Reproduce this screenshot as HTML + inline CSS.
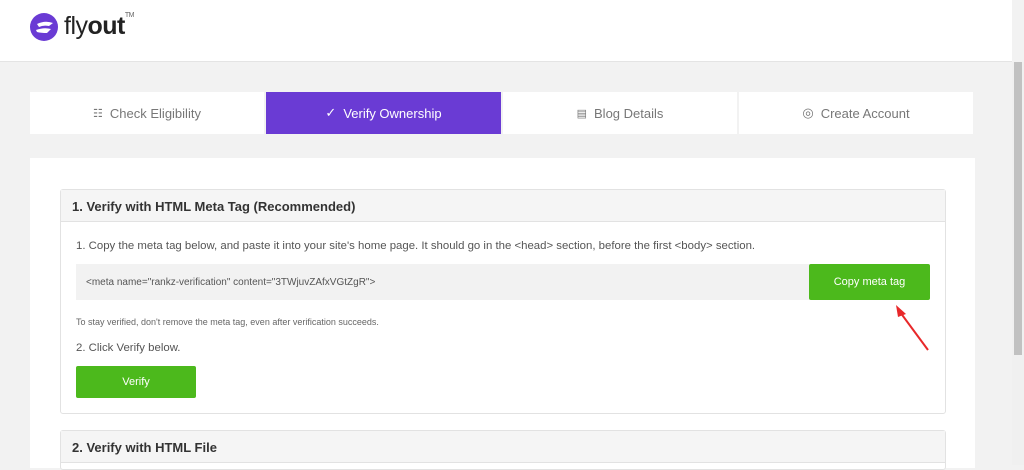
<!DOCTYPE html>
<html><head><style>
*{margin:0;padding:0;box-sizing:border-box}
body{width:1024px;height:465px;overflow:hidden;background:#f2f2f2;font-family:"Liberation Sans",sans-serif;position:relative;color:#444}
.hdr{position:absolute;left:0;top:0;width:1012px;height:62px;background:#fff;border-bottom:1px solid #e4e4e4}
.sb{position:absolute;right:0;top:62px;width:12px;height:403px;background:#f0f0f0}
.sb div{position:absolute;left:2px;top:0;width:8px;height:293px;background:#c1c1c1}
.tab{position:absolute;top:92px;height:42px;background:#fff;font-size:13px;color:#777;display:flex;align-items:center;justify-content:center;gap:7px}
.tab.on{background:#6a3bd4;color:#fff}
.panel{position:absolute;left:30px;top:158px;width:945px;height:310px;background:#fff}
.card{position:absolute;left:60px;width:886px;border:1px solid #e2e2e2;border-radius:3px;background:#fff}
.ch{height:32px;background:#f5f5f5;border-bottom:1px solid #e2e2e2;font-size:13px;font-weight:bold;color:#333;padding:9px 11px}
.t{position:absolute;font-size:11.4px;color:#555;white-space:nowrap}
.btn{position:absolute;background:#4cb91c;color:#fff;font-size:11px;display:flex;align-items:center;justify-content:center;border-radius:2px}
</style></head><body>
<div class="hdr">
<svg style="position:absolute;left:29px;top:12px" width="30" height="30" viewBox="0 0 30 30"><circle cx="15" cy="15" r="14" fill="#6a3bd4"/><path d="M8 12 Q16 8 24 11 L20 14 Q14 13 10 15Z M7 18 Q15 15 22 17 L18 21 Q12 21 8 20Z" fill="#fff"/></svg>
<div style="position:absolute;left:64px;top:12px;font-size:25px;color:#222;letter-spacing:-0.5px">fly<b>out</b><sup style="font-size:7px;vertical-align:top;color:#666">TM</sup></div>
</div>
<div class="sb"><div></div></div>
<div class="tab" style="left:30px;width:234px"><span style="font-size:11px">☷</span>Check Eligibility</div>
<div class="tab on" style="left:266px;width:235px"><span>✓</span>Verify Ownership</div>
<div class="tab" style="left:503px;width:234px"><span style="font-size:11px">▤</span>Blog Details</div>
<div class="tab" style="left:739px;width:234px"><span>◎</span>Create Account</div>
<div class="panel"></div>
<div class="card" style="top:189px;height:225px"><div class="ch">1. Verify with HTML Meta Tag (Recommended)</div></div>
<div class="t" style="left:76px;top:240px">1. Copy the meta tag below, and paste it into your site's home page. It should go in the &lt;head&gt; section, before the first &lt;body&gt; section.</div>
<div style="position:absolute;left:76px;top:264px;width:734px;height:36px;background:#f2f2f2"></div>
<div class="t" style="left:86px;top:277px;font-size:10px">&lt;meta name="rankz-verification" content="3TWjuvZAfxVGtZgR"&gt;</div>
<div class="btn" style="left:809px;top:264px;width:121px;height:36px">Copy meta tag</div>
<svg style="position:absolute;left:890px;top:300px" width="40" height="55"><path d="M38 50 L10 12" stroke="#e8282a" stroke-width="2"/><path d="M6 5 L16 14 L8 17Z" fill="#e8282a"/></svg>
<div class="t" style="left:76px;top:317px;font-size:9px;color:#666">To stay verified, don't remove the meta tag, even after verification succeeds.</div>
<div class="t" style="left:76px;top:342px">2. Click Verify below.</div>
<div class="btn" style="left:76px;top:366px;width:120px;height:32px">Verify</div>
<div class="card" style="top:430px;height:40px"><div class="ch">2. Verify with HTML File</div></div>
</body></html>
